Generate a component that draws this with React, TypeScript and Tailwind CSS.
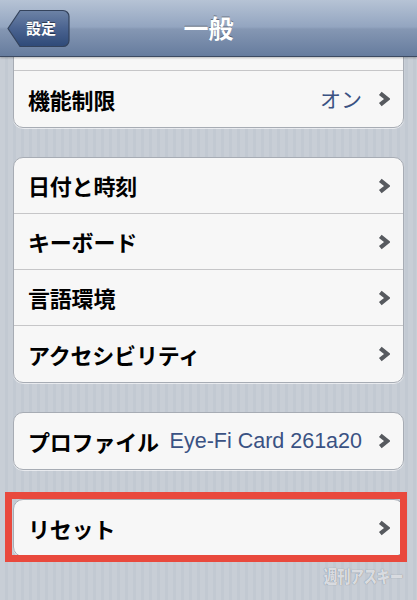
import React from "react";

const jp = "font-['Noto_Sans_CJK_JP','Noto_Sans',sans-serif]";

function Chevron() {
  return (
    <svg width="12" height="16" viewBox="0 0 12 16" className="shrink-0">
      <polyline
        points="2.3,2.3 9.2,8 2.3,13.7"
        fill="none"
        stroke="#575a5f"
        strokeWidth="4.2"
        strokeLinejoin="miter"
      />
    </svg>
  );
}

type RowProps = {
  label?: string;
  detail?: string;
  latin?: boolean;
};

function Row({ label, detail, latin }: RowProps) {
  return (
    <div className="h-[56px] flex items-center pl-[14px] pr-[13px]">
      {label && (
        <span className={`${jp} text-[22px] font-bold text-black tracking-[-0.2px]`}>{label}</span>
      )}
      <div className="flex-1" />
      {detail && (
        <span
          className={
            latin
              ? "font-['Liberation_Sans',Arial,sans-serif] text-[21.5px] text-[#3a5283] mr-[16px]"
              : `${jp} text-[21px] text-[#3a5283] mr-[16px]`
          }
        >
          {detail}
        </span>
      )}
      {label && <Chevron />}
    </div>
  );
}

function Card({ children, className = "" }: { children: React.ReactNode; className?: string }) {
  return (
    <div
      className={`rounded-[10px] border border-[#a7acb4] bg-[#f7f7f7] overflow-hidden divide-y divide-[#c6c6c8] shadow-[0_1px_0_rgba(255,255,255,0.6)] ${className}`}
    >
      {children}
    </div>
  );
}

function BackButton() {
  return (
    <div className="relative w-[63px] h-[39px] flex items-center pl-[19px]">
      <svg width="63" height="39" viewBox="0 0 63 39" className="absolute inset-0">
        <defs>
          <linearGradient id="bb" x1="0" y1="0" x2="0" y2="1">
            <stop offset="0" stopColor="#6d83a6" />
            <stop offset="0.5" stopColor="#4a6390" />
            <stop offset="1" stopColor="#2f4a78" />
          </linearGradient>
        </defs>
        <path
          d="M13 1.5 H56 a6 6 0 0 1 6 6 V31.5 a6 6 0 0 1 -6 6 H13 L1 19.5 Z"
          fill="url(#bb)"
          stroke="#34435c"
          strokeWidth="1.2"
        />
      </svg>
      <span className={`${jp} relative text-[15px] font-bold text-white [text-shadow:0_-1px_0_rgba(0,0,0,0.45)]`}>
        設定
      </span>
    </div>
  );
}

export default function App() {
  return (
    <div className="w-[417px] h-[600px] overflow-hidden flex flex-col bg-[repeating-linear-gradient(90deg,#c8ced6_0px,#c8ced6_5px,#c2c9d2_5px,#c2c9d2_8px)] relative">
      {/* Nav bar */}
      <div className="relative z-10 h-[57px] shrink-0 grid grid-cols-[1fr_auto_1fr] items-center px-[7px] bg-[linear-gradient(180deg,#b6c3d5_0%,#93a5c0_48%,#8597b3_52%,#667c9e_100%)] border-b border-[#3c4a62] shadow-[0_1px_2px_rgba(0,0,0,0.25)]">
        <BackButton />
        <span className={`${jp} text-[25px] font-bold text-white [text-shadow:0_-1px_0_rgba(0,0,0,0.4)]`}>
          一般
        </span>
        <div />
      </div>

      {/* Content */}
      <div className="flex-1 overflow-hidden flex flex-col gap-[29px] px-[13px]">
        <Card className="-mt-[43px] rounded-t-none">
          <Row />
          <Row label="機能制限" detail="オン" />
        </Card>

        <Card>
          <Row label="日付と時刻" />
          <Row label="キーボード" />
          <Row label="言語環境" />
          <Row label="アクセシビリティ" />
        </Card>

        <Card>
          <Row label="プロファイル" detail="Eye-Fi Card 261a20" latin />
        </Card>

        <div className="relative">
          <Card>
            <Row label="リセット" />
          </Card>
          <div className="absolute -left-[8px] right-[-3px] -top-[7px] -bottom-[5px] border-[7px] border-[#e9493d] pointer-events-none" />
        </div>
      </div>

      {/* Watermark */}
      <div className="absolute right-[14px] bottom-[11px] origin-right scale-x-[0.8]">
        <span className={`${jp} text-[17px] leading-[17px] font-black tracking-[-0.5px] text-[#eceef2]/85 [text-shadow:0_0_1px_rgba(100,105,115,0.9)]`}>
          週刊アスキー
        </span>
      </div>
    </div>
  );
}
